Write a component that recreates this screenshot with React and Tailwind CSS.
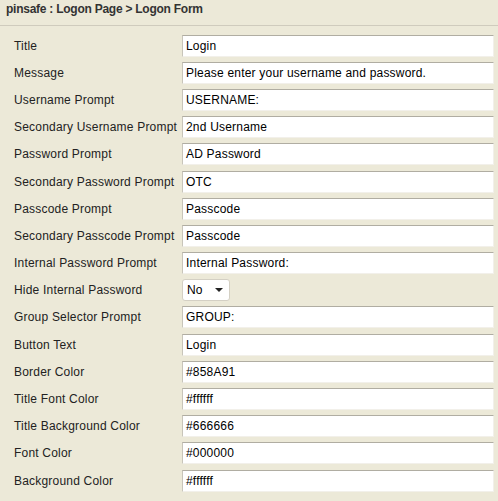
import React from 'react'

const rows = [
    { label: 'Title', value: 'Login' },
    { label: 'Message', value: 'Please enter your username and password.' },
    { label: 'Username Prompt', value: 'USERNAME:' },
    { label: 'Secondary Username Prompt', value: '2nd Username' },
    { label: 'Password Prompt', value: 'AD Password' },
    { label: 'Secondary Password Prompt', value: 'OTC' },
    { label: 'Passcode Prompt', value: 'Passcode' },
    { label: 'Secondary Passcode Prompt', value: 'Passcode' },
    { label: 'Internal Password Prompt', value: 'Internal Password:' },
    { label: 'Hide Internal Password', value: 'No', select: true },
    { label: 'Group Selector Prompt', value: 'GROUP:' },
    { label: 'Button Text', value: 'Login' },
    { label: 'Border Color', value: '#858A91' },
    { label: 'Title Font Color', value: '#ffffff' },
    { label: 'Title Background Color', value: '#666666' },
    { label: 'Font Color', value: '#000000' },
    { label: 'Background Color', value: '#ffffff' },
]

function App () {
    return (
        <div className="w-[498px] h-[501px] bg-[#ece9d8] font-['Liberation_Sans',Arial,sans-serif] text-[12px] text-[#222] overflow-hidden">
            <div className="h-[26px] pt-[2px] pl-[6px] border-b border-[#cfcbbd] font-bold text-[#333] tracking-[-0.25px] leading-[14px]">
                pinsafe : Logon Page &gt; Logon Form
            </div>

            <div className="pt-[6px] tracking-[0.2px]">
                {rows.map((row, i) => (
                    <div className="h-[27.2px] flex items-center" key={i}>
                        <div className="w-[182px] pl-[14px] whitespace-nowrap">{row.label}</div>
                        {row.select ? (
                            <div className="w-[48px] h-[22px] flex items-center justify-between bg-white border border-[#d4d0c4] rounded-[3px] pl-[4px] pr-[6px] text-black">
                                <span>{row.value}</span>
                                <svg width="8" height="4" viewBox="0 0 8 4">
                                    <path d="M0 0 L8 0 L4 4 Z" fill="#222" />
                                </svg>
                            </div>
                        ) : (
                            <div className="w-[312px] h-[22px] flex items-center bg-white border border-t-[#b0ada2] border-l-[#c8c5ba] border-r-[#f2f0ea] border-b-[#f2f0ea] pl-[3px] text-black whitespace-nowrap">
                                {row.value}
                            </div>
                        )}
                    </div>
                ))}
            </div>
        </div>
    )
}

export default App
